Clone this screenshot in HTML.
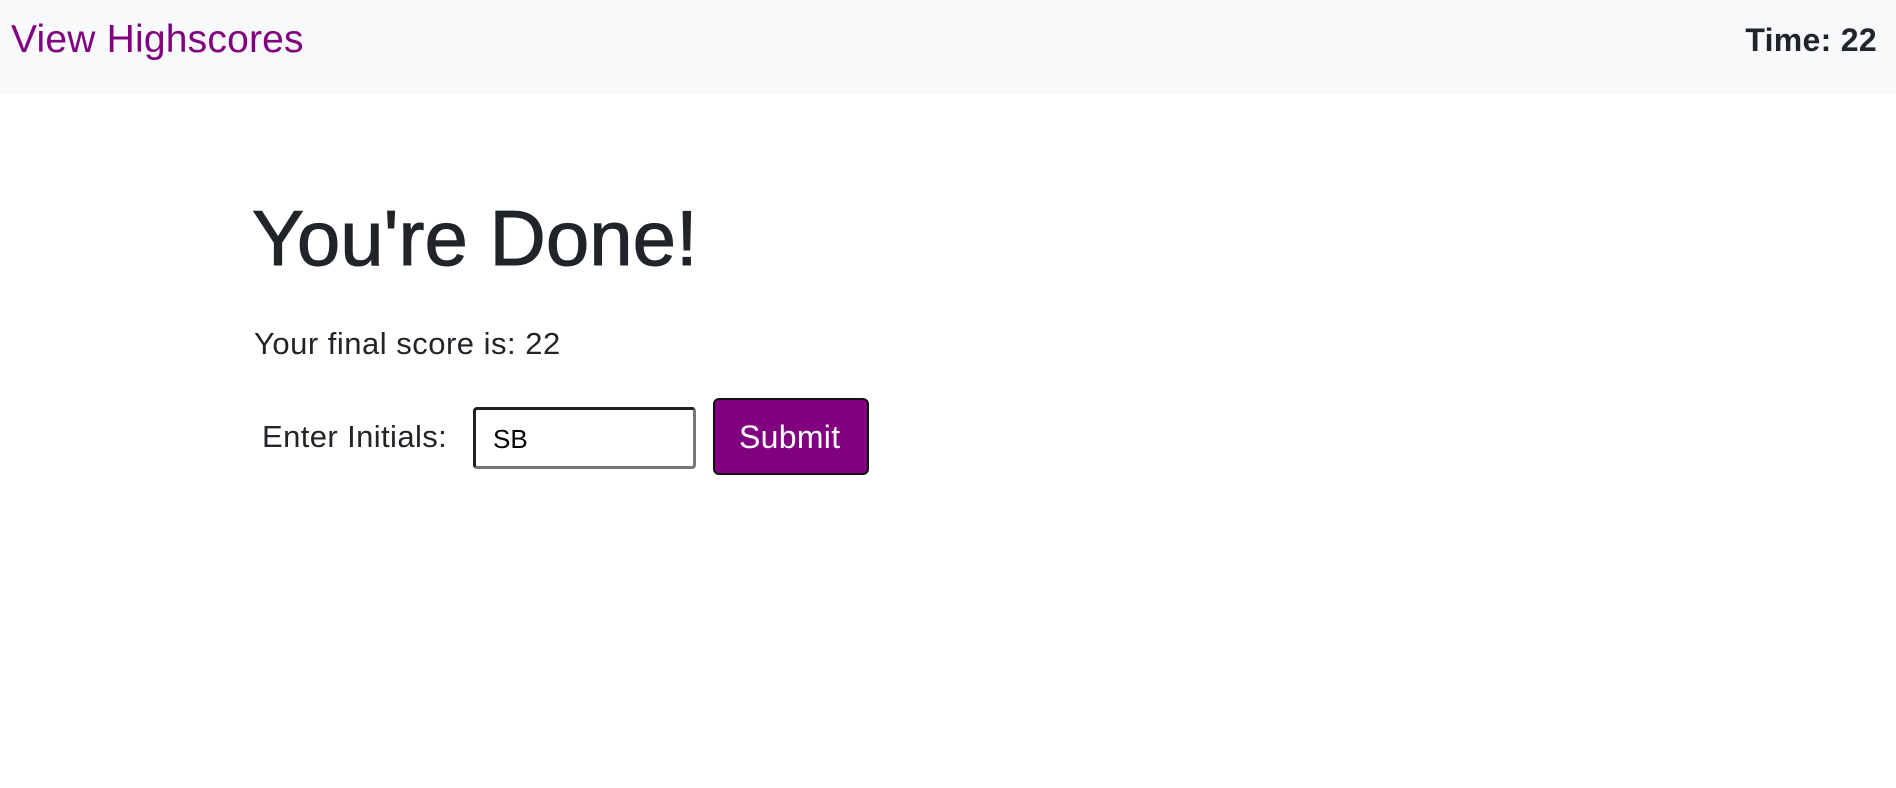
<!DOCTYPE html>
<html><head><style>
body{margin:0;width:1896px;height:788px;background:#fff;font-family:"Liberation Sans",sans-serif;color:#212529;position:relative;overflow:hidden}
.nav{position:absolute;left:0;top:0;width:1896px;height:94px;background:#f8f9fa}
.a{position:absolute;white-space:nowrap;line-height:1}
</style></head><body>
<div class="nav"></div>
<div class="a" style="left:11px;top:20px;font-size:39px;color:#800080;letter-spacing:0.2px">View Highscores</div>
<div class="a" style="right:19px;top:24px;font-size:32px;font-weight:bold;letter-spacing:0.3px">Time: 22</div>
<div class="a" style="left:252px;top:199px;font-size:78px;letter-spacing:0;-webkit-text-stroke:1px #212529">You're Done!</div>
<div class="a" style="left:254px;top:328px;font-size:31px;letter-spacing:0.5px">Your final score is: 22</div>
<div class="a" style="left:262px;top:421px;font-size:31px;letter-spacing:0.4px">Enter Initials:</div>
<div style="position:absolute;left:473px;top:407px;width:217px;height:56px;border:3px solid #222;border-right-color:#777;border-bottom-color:#777;border-radius:4px;background:#fff"></div>
<div class="a" style="left:493px;top:426px;font-size:26px;color:#000">SB</div>
<div style="position:absolute;left:713px;top:398px;width:152px;height:73px;background:#800080;border:2px solid #111;border-radius:6px"></div>
<div class="a" style="left:739px;top:421px;font-size:32px;color:#fff;letter-spacing:0.3px">Submit</div>
</body></html>
